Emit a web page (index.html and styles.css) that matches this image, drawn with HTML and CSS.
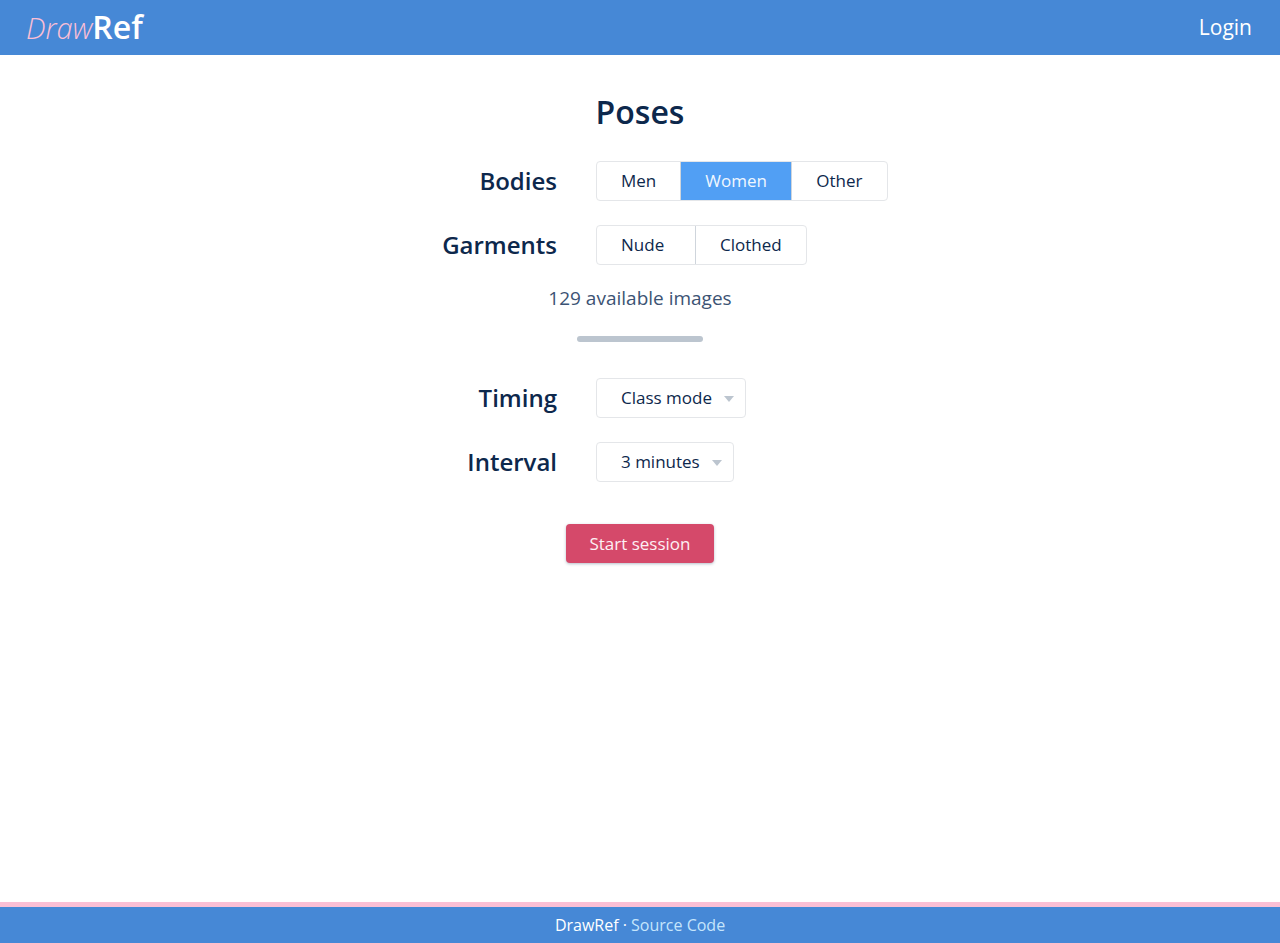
FILE: index.html
```html
<!DOCTYPE html>
<html lang="en">
<head>
  <meta charset="utf-8">
  <meta name="viewport" content="width=device-width, initial-scale=1">
  <title>DrawRef</title>
  <link rel="stylesheet" href="styles.css">
</head>
<body class="page">
  <header class="header">
    <a class="logo" href="#"><span class="logo-draw">Draw</span><span class="logo-ref">Ref</span></a>
    <a class="login" href="#">Login</a>
  </header>
  <main class="main">
    <h1 class="title">Poses</h1>
    <form class="form">
      <div class="row" role="radiogroup" aria-labelledby="bodies">
        <span class="row-label" id="bodies">Bodies</span>
        <div class="segments">
          <label class="segment"><input type="radio" name="bodies">Men</label>
          <label class="segment"><input type="radio" name="bodies" checked>Women</label>
          <label class="segment segment-wide"><input type="radio" name="bodies">Other</label>
        </div>
      </div>
      <div class="row" role="radiogroup" aria-labelledby="garments">
        <span class="row-label" id="garments">Garments</span>
        <div class="segments">
          <label class="segment segment-wide segment-start"><input type="radio" name="garments">Nude</label>
          <label class="segment"><input type="radio" name="garments">Clothed</label>
        </div>
      </div>
      <p class="count">129 available images</p>
      <hr class="divider">
      <div class="row">
        <label class="row-label" for="timing">Timing</label>
        <div class="picker"><select id="timing"><option>Class mode</option></select></div>
      </div>
      <div class="row">
        <label class="row-label" for="interval">Interval</label>
        <div class="picker"><select id="interval"><option>3 minutes</option></select></div>
      </div>
      <button class="start" type="button">Start session</button>
    </form>
  </main>
  <footer class="footer"><span class="footer-name">DrawRef</span> · <a class="footer-link" href="#">Source Code</a></footer>
</body>
</html>
```

FILE: styles.css
```css
* {
  box-sizing: border-box;
}

.page {
  display: flex;
  flex-direction: column;
  min-height: 100vh;
  margin: 0;
  background: #fff;
  color: #0d284c;
  font-family: "Open Sans", "Noto Sans", sans-serif;
  font-size: 17px;
  line-height: 24px;
}

.header {
  display: flex;
  align-items: center;
  justify-content: space-between;
  padding: 6px 28px 7px 26px;
  background: #4688d6;
}

.logo {
  display: flex;
  align-items: baseline;
  font-size: 32px;
  line-height: 42px;
  text-decoration: none;
}

.logo-draw {
  color: #fbbfd5;
  font-size: 29px;
  font-style: italic;
  font-weight: 300;
  line-height: 40px;
}

.logo-ref {
  color: #fff;
  font-weight: 600;
}

.login {
  color: #fff;
  font-size: 21px;
  line-height: 28px;
  text-decoration: none;
}

.main {
  flex: 1;
}

.title {
  margin: 35px 0 27px;
  font-size: 32px;
  font-weight: 600;
  line-height: 44px;
  text-align: center;
}

.form {
  display: flex;
  flex-direction: column;
  align-items: center;
}

.row {
  display: grid;
  grid-template-columns: 45% 55%;
  align-items: center;
  width: 100%;
  margin-bottom: 24px;
}

.row-label {
  padding-right: 19px;
  font-size: 24px;
  font-weight: 600;
  line-height: 32px;
  text-align: right;
}

.segments {
  display: flex;
  justify-self: start;
  margin-left: 20px;
  overflow: hidden;
  border: 1px solid #e4e6e9;
  border-radius: 4px;
}

.segment {
  padding: 7px 24px;
  text-align: center;
  cursor: pointer;
}

.segment + .segment {
  border-left: 1px solid #cfd5dc;
}

.segment-wide {
  min-width: 96px;
}

.segment-start {
  min-width: 98px;
  text-align: left;
}

.segment input {
  position: absolute;
  margin: 0;
  opacity: 0;
  pointer-events: none;
}

.segment:has(input:checked) {
  background: #519ff4;
  color: #f0f7ff;
}

.count {
  margin: -3px 0 26px;
  color: #3c5374;
  font-size: 19px;
}

.divider {
  width: 126px;
  height: 6px;
  margin: 0 0 36px;
  border: 0;
  border-radius: 3px;
  background: #bcc5cf;
}

.picker {
  position: relative;
  justify-self: start;
  margin-left: 20px;
}

.picker::after {
  position: absolute;
  top: 18px;
  right: 12px;
  border: 5px solid transparent;
  border-top: 6px solid #bcc5cf;
  border-bottom: 0;
  content: "";
  pointer-events: none;
}

.picker select {
  display: block;
  height: 40px;
  padding: 0 33px 0 24px;
  appearance: none;
  border: 1px solid #e4e6e9;
  border-radius: 4px;
  background: #fff;
  color: inherit;
  font: inherit;
}

.start {
  margin-top: 18px;
  padding: 8px 23px 7px;
  border: 0;
  border-radius: 4px;
  background: #d5496a;
  box-shadow: 0 1px 3px rgba(13, 40, 76, 0.3);
  color: #fdf0f4;
  font: inherit;
}

.footer {
  padding: 6px 0;
  border-top: 5px solid #fbbfd5;
  background: #4688d6;
  color: #fff;
  font-size: 16px;
  text-align: center;
}

.footer-name {
  font-weight: 500;
}

.footer-link {
  color: #c5e5fc;
  text-decoration: none;
}
```
